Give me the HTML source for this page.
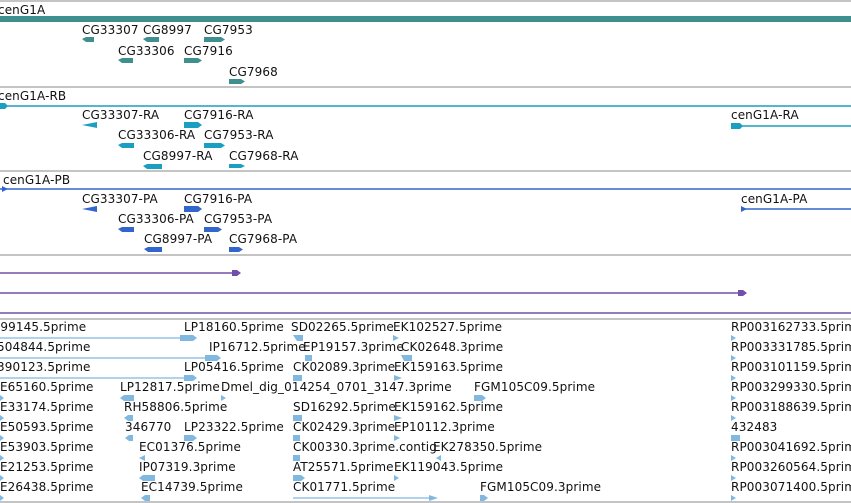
<!DOCTYPE html>
<html><head><meta charset="utf-8"><style>
html,body{margin:0;padding:0;background:#fff;width:851px;height:503px;overflow:hidden}
svg text{font-family:"DejaVu Sans","Liberation Sans",sans-serif;font-size:12px;letter-spacing:0.1px;fill:#111}
</style></head><body>
<svg width="851" height="503" xmlns="http://www.w3.org/2000/svg">
<g stroke="#c4c4c4" stroke-width="2">
<line x1="0" y1="1" x2="851" y2="1"/><line x1="0" y1="87" x2="851" y2="87"/>
<line x1="0" y1="171" x2="851" y2="171"/><line x1="0" y1="255" x2="851" y2="255"/>
<line x1="0" y1="319" x2="851" y2="319"/><line x1="0" y1="502" x2="851" y2="502"/>
</g>
<text x="-2" y="14">cenG1A</text>
<rect x="0" y="16" width="851" height="6" fill="#3f8f8f"/>
<g fill="#3f8f8f">
<polygon points="82,39 86,37 94,37 94,42 86,42"/>
<polygon points="143,39 147,37 159,37 159,42 147,42"/>
<polygon points="204,37 221,37 225,39.5 221,42 204,42"/>
<polygon points="118,60 122,58 133,58 133,63 122,63"/>
<polygon points="184,58 198,58 202,60.5 198,63 184,63"/>
<polygon points="229,79 241,79 245,81.5 241,84 229,84"/>
</g>
<text x="82" y="34">CG33307</text><text x="143" y="34">CG8997</text><text x="204" y="34">CG7953</text>
<text x="118" y="55">CG33306</text><text x="184" y="55">CG7916</text><text x="229" y="76">CG7968</text>
<text x="-2" y="100">cenG1A-RB</text>
<line x1="0" y1="106" x2="851" y2="106" stroke="#1a9fc0" stroke-width="1.5"/>
<polygon points="0,103 5,103 8,106 5,109 0,109" fill="#1a9fc0"/>
<text x="82" y="119">CG33307-RA</text><text x="184" y="119">CG7916-RA</text>
<text x="118" y="139">CG33306-RA</text><text x="204" y="139">CG7953-RA</text>
<text x="143" y="160">CG8997-RA</text><text x="229" y="160">CG7968-RA</text>
<text x="731" y="119">cenG1A-RA</text>
<line x1="731" y1="126" x2="851" y2="126" stroke="#1a9fc0" stroke-width="1.5"/>
<g fill="#1a9fc0">
<polygon points="82,125 97,122 97,128"/>
<polygon points="184,122 198,122 202,125 198,128 184,128"/>
<polygon points="118,145 122,143 134,143 134,148 122,148"/>
<polygon points="204,143 221,143 225,145.5 221,148 204,148"/>
<polygon points="143,166 147,164 162,164 162,169 147,169"/>
<polygon points="229,164 241,164 245,166 241,168 229,168"/>
<polygon points="731,123 740,123 743,126 740,129 731,129"/>
</g>
<text x="3" y="184">cenG1A-PB</text>
<line x1="0" y1="189" x2="851" y2="189" stroke="#3366cc" stroke-width="1.5"/>
<polygon points="2,186 8,189 2,192" fill="#3366cc"/>
<text x="82" y="203">CG33307-PA</text><text x="184" y="203">CG7916-PA</text>
<text x="118" y="223">CG33306-PA</text><text x="204" y="223">CG7953-PA</text>
<text x="144" y="243">CG8997-PA</text><text x="229" y="243">CG7968-PA</text>
<text x="741" y="203">cenG1A-PA</text>
<line x1="741" y1="209" x2="851" y2="209" stroke="#3366cc" stroke-width="1.5"/>
<g fill="#3366cc">
<polygon points="82,209 97,206 97,212"/>
<polygon points="184,206 198,206 202,209 198,212 184,212"/>
<polygon points="118,229 122,227 134,227 134,232 122,232"/>
<polygon points="204,227 218,227 222,229.5 218,232 204,232"/>
<polygon points="144,249 148,247 162,247 162,252 148,252"/>
<polygon points="229,247 239,247 243,249.5 239,252 229,252"/>
<polygon points="741,206 747,209 741,212"/>
</g>
<g stroke="#7050a8" stroke-width="1.5">
<line x1="0" y1="273" x2="235" y2="273"/><line x1="0" y1="293" x2="740" y2="293"/><line x1="0" y1="313" x2="851" y2="313"/>
</g>
<g fill="#7050a8">
<polygon points="232,270 237,270 241,273 237,276 232,276"/>
<polygon points="738,290 743,290 747,293 743,296 738,296"/>
</g>
<g stroke="#80b8e0" stroke-width="1.2">
<line x1="0" y1="338" x2="195" y2="338"/><line x1="0" y1="358" x2="218" y2="358"/>
<line x1="0" y1="378" x2="195" y2="378"/><line x1="293" y1="498" x2="436" y2="498"/>
</g>
<g fill="#80b8e0">
<polygon points="180,335 193,335 197,338 193,341 180,341"/>
<polygon points="205,355 217,355 221,358 217,361 205,361"/>
<polygon points="184,375 193,375 197,378 193,381 184,381"/>
<polygon points="184,435 193,435 197,438 193,441 184,441"/>
<polygon points="429,495 438,498 429,501"/>
<polygon points="293,335 303,335 303,341 297,341"/>
<polygon points="305,355 312,355 312,361 305,361"/>
<polygon points="401,355 412,355 412,361 404,361"/>
<polygon points="293,375 302,375 302,381 293,381"/>
<polygon points="293,415 302,415 302,421 293,421"/>
<polygon points="293,435 300,435 300,441 293,441"/>
<polygon points="293,455 300,455 300,461 293,461"/>
<polygon points="293,475 301,475 305,478 301,481 293,481"/>
<polygon points="393,335 399,338 393,341"/>
<polygon points="394,375 402,378 394,381"/>
<polygon points="394,415 402,418 394,421"/>
<polygon points="394,435 400,438 394,441"/>
<polygon points="394,475 399,478 394,481"/>
<polygon points="436,458 441,455 441,461"/>
<polygon points="120,398 124,395 134,395 134,401 124,401"/>
<polygon points="221,395 226,398 221,401"/>
<polygon points="474,395 482,395 486,398 482,401 474,401"/>
<polygon points="480,495 484,495 488,498 484,501 480,501"/>
<polygon points="124,418 128,415 133,415 133,421 128,421"/>
<polygon points="125,438 129,435 133,435 133,441 129,441"/>
<polygon points="139,458 145,455 145,461"/>
<polygon points="139,478 143,475 155,475 155,481 143,481"/>
<polygon points="141,498 145,495 150,495 150,501 145,501"/>
<polygon points="731,335 736,338 731,341"/><polygon points="731,355 736,358 731,361"/>
<polygon points="731,375 736,378 731,381"/><polygon points="731,395 736,398 731,401"/>
<polygon points="731,415 736,418 731,421"/><polygon points="731,435 740,435 740,441 731,441"/>
<polygon points="731,455 736,458 731,461"/><polygon points="731,475 736,478 731,481"/>
<polygon points="731,495 736,498 731,501"/>
<polygon points="0,395 4,398 0,401"/><polygon points="0,415 4,418 0,421"/><polygon points="0,435 4,438 0,441"/>
<polygon points="0,455 4,458 0,461"/><polygon points="0,475 4,478 0,481"/><polygon points="0,495 4,498 0,501"/>
</g>
<text x="-4" y="331">-99145.5prime</text><text x="184" y="331">LP18160.5prime</text><text x="291" y="331">SD02265.5prime</text><text x="393" y="331">EK102527.5prime</text><text x="731" y="331">RP003162733.5prime</text>
<text x="-3" y="351">504844.5prime</text><text x="209" y="351">IP16712.5prime</text><text x="303" y="351">EP19157.3prime</text><text x="401" y="351">CK02648.3prime</text><text x="731" y="351">RP003331785.5prime</text>
<text x="-3" y="371">390123.5prime</text><text x="184" y="371">LP05416.5prime</text><text x="293" y="371">CK02089.3prime</text><text x="394" y="371">EK159163.5prime</text><text x="731" y="371">RP003101159.5prime</text>
<text x="0" y="391">E65160.5prime</text><text x="120" y="391">LP12817.5prime</text><text x="221" y="391">Dmel_dig_014254_0701_3147.3prime</text><text x="474" y="391">FGM105C09.5prime</text><text x="731" y="391">RP003299330.5prime</text>
<text x="0" y="411">E33174.5prime</text><text x="124" y="411">RH58806.5prime</text><text x="293" y="411">SD16292.5prime</text><text x="394" y="411">EK159162.5prime</text><text x="731" y="411">RP003188639.5prime</text>
<text x="0" y="431">E50593.5prime</text><text x="125" y="431">346770</text><text x="184" y="431">LP23322.5prime</text><text x="293" y="431">CK02429.3prime</text><text x="394" y="431">EP10112.3prime</text><text x="731" y="431">432483</text>
<text x="0" y="451">E53903.5prime</text><text x="139" y="451">EC01376.5prime</text><text x="293" y="451">CK00330.3prime.contig</text><text x="433" y="451">EK278350.5prime</text><text x="731" y="451">RP003041692.5prime</text>
<text x="0" y="471">E21253.5prime</text><text x="139" y="471">IP07319.3prime</text><text x="293" y="471">AT25571.5prime</text><text x="394" y="471">EK119043.5prime</text><text x="731" y="471">RP003260564.5prime</text>
<text x="0" y="491">E26438.5prime</text><text x="141" y="491">EC14739.5prime</text><text x="293" y="491">CK01771.5prime</text><text x="480" y="491">FGM105C09.3prime</text><text x="731" y="491">RP003071400.5prime</text>
</svg>
</body></html>
